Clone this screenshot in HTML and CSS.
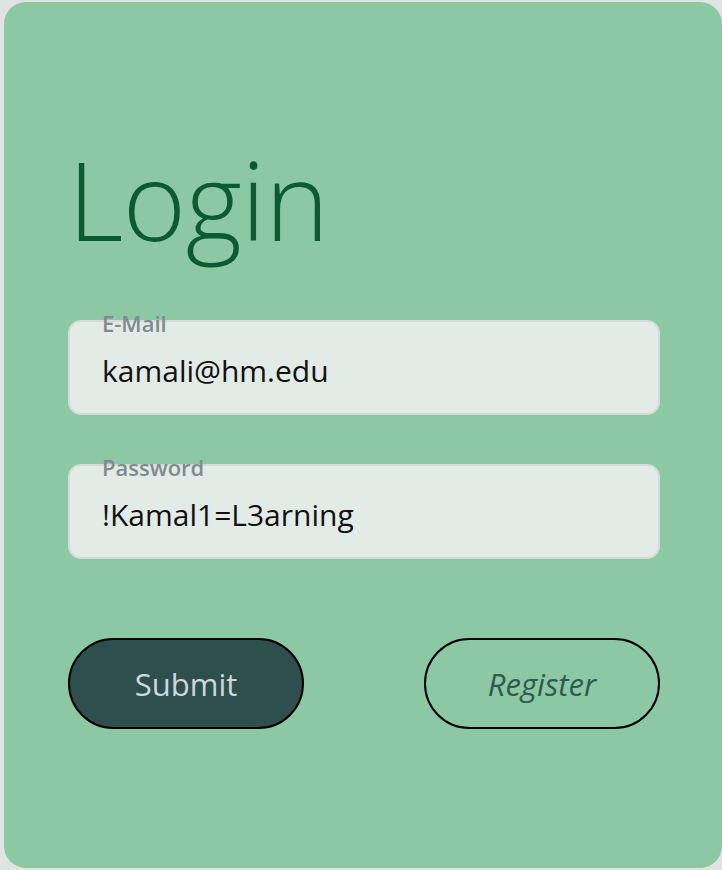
FILE: index.html
```html
<!DOCTYPE html>
<html lang="en">
<head>
<meta charset="utf-8">
<title>Login</title>
<link rel="stylesheet" href="styles.css">
</head>
<body>
<main class="card">
  <h1 class="title">Login</h1>
  <form class="form">
    <div class="field">
      <label class="field-label" for="email">E-Mail</label>
      <input class="field-input" id="email" type="text" value="kamali@hm.edu">
    </div>
    <div class="field">
      <label class="field-label" for="pw">Password</label>
      <input class="field-input" id="pw" type="text" value="!Kamal1=L3arning">
    </div>
    <div class="actions">
      <button type="button" class="btn btn-primary">Submit</button>
      <button type="button" class="btn btn-outline">Register</button>
    </div>
  </form>
</main>
</body>
</html>
```

FILE: styles.css
```css
* { box-sizing: border-box; }

html, body {
  margin: 0;
  padding: 0;
}

body {
  background: #dfe4e1;
  font-family: "Open Sans", "Noto Sans", sans-serif;
  width: 722px;
  height: 870px;
  overflow: hidden;
}

.card {
  margin: 2px 0 0 4px;
  width: 718px;
  height: 866px;
  background: #8cc8a4;
  border-radius: 22px;
  padding: 143px 62px 0 64px;
  display: flex;
  flex-direction: column;
}

.title {
  margin: 0;
  font-size: 108px;
  line-height: 110px;
  font-weight: 300;
  color: #0b5a33;
  letter-spacing: -0.5px;
}

.form {
  margin-top: 65px;
  display: flex;
  flex-direction: column;
  gap: 49px;
}

.field {
  position: relative;
}

.field-label {
  position: absolute;
  left: 34px;
  top: -9px;
  font-size: 22px;
  line-height: 24px;
  font-weight: 600;
  color: #7f8b8c;
}

.field-input {
  display: block;
  width: 100%;
  height: 95px;
  margin: 0;
  padding: 6px 32px 0 32px;
  border: 2px solid #d3ddd7;
  border-radius: 13px;
  background: #e3ebe7;
  font-family: "Open Sans", "Noto Sans", sans-serif;
  font-size: 30px;
  color: #111;
  outline: none;
}

.actions {
  margin-top: 30px;
  display: flex;
  justify-content: space-between;
}

.btn {
  width: 236px;
  height: 91px;
  border: 2px solid #000;
  border-radius: 46px;
  font-family: "Open Sans", "Noto Sans", sans-serif;
  font-size: 31px;
  padding: 0;
  cursor: pointer;
}

.btn-primary {
  background: #2f4f4f;
  color: #cbd9dd;
}

.btn-outline {
  background: transparent;
  color: #2f5a52;
  font-style: italic;
}
```
